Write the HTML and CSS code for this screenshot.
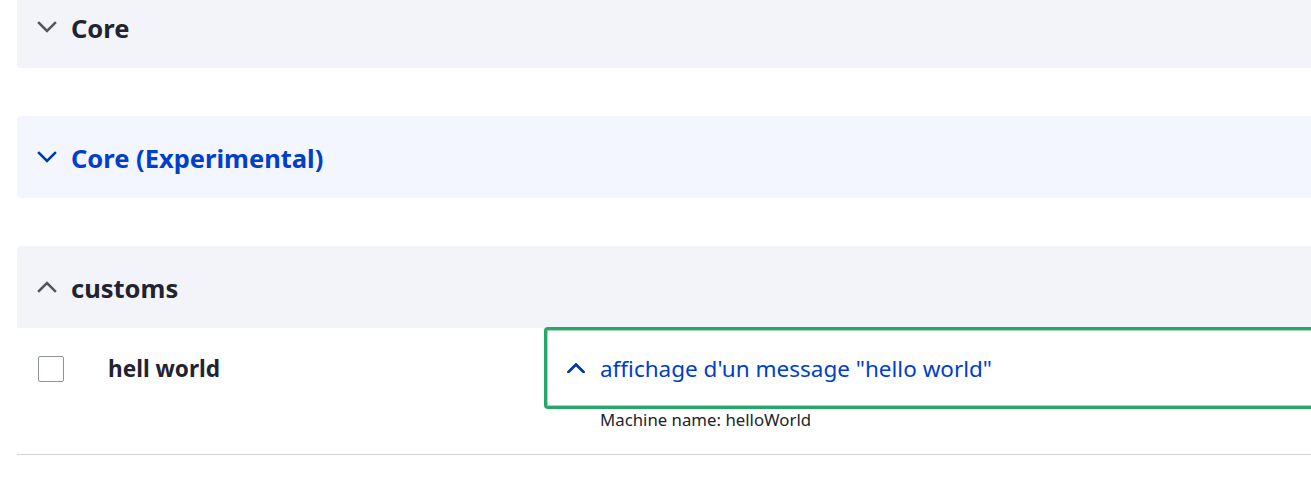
FILE: index.html
```html
<!DOCTYPE html>
<html lang="fr">
<head>
<meta charset="utf-8">
<title>Extend</title>
<link rel="stylesheet" href="styles.css">
</head>
<body>
<div class="page">
  <div class="panel panel-first">
    <div class="summary">
      <svg class="chev" viewBox="0 0 20 12" width="20" height="12"><polyline points="2,2 10,10 18,2"/></svg>
      <span class="title">Core</span>
    </div>
  </div>

  <div class="panel panel-hover">
    <div class="summary">
      <svg class="chev" viewBox="0 0 20 12" width="20" height="12"><polyline points="2,2 10,10 18,2"/></svg>
      <span class="title">Core (Experimental)</span>
    </div>
  </div>

  <div class="panel panel-open">
    <div class="summary">
      <svg class="chev" viewBox="0 0 20 12" width="20" height="12"><polyline points="2,10 10,2 18,10"/></svg>
      <span class="title">customs</span>
    </div>
    <div class="row">
      <div class="cell-check"><span class="checkbox"></span></div>
      <div class="cell-name">hell world</div>
      <div class="cell-desc">
        <div class="desc-summary">
          <svg class="chev-sm" viewBox="0 0 18 10" width="18" height="10"><polyline points="1.5,9 9,1.5 16.5,9"/></svg>
          <span class="desc-text">affichage d'un message "hello world"</span>
        </div>
        <div class="machine">Machine name: helloWorld</div>
      </div>
    </div>
  </div>
</div>
</body>
</html>
```

FILE: styles.css
```css
html, body {
  margin: 0;
  padding: 0;
  background: #ffffff;
  overflow: hidden;
}

body {
  font-family: "Noto Sans", "Open Sans", Arial, sans-serif;
  color: #222330;
}

.page {
  padding-left: 17px;
  margin-right: -120px;
  margin-top: -14px;
}

.panel {
  background: #f3f4f9;
  border-radius: 4px;
  margin-bottom: 48px;
}

.panel-hover {
  background: #f3f6fe;
}

.panel-hover .title {
  color: #003ecc;
}

.panel-hover .chev polyline {
  stroke: #0036b1;
}

.panel-open {
  background: #ffffff;
  border-radius: 4px 4px 0 0;
}

.panel-open .summary {
  background: #f3f4f9;
  border-radius: 4px 4px 0 0;
}

.summary {
  height: 82px;
  display: flex;
  align-items: center;
  padding-left: 20px;
  gap: 14px;
}

.chev {
  display: block;
  flex: none;
}

.chev polyline {
  fill: none;
  stroke: #55565b;
  stroke-width: 2.5;
  stroke-linecap: square;
}

.title {
  font-size: 25.5px;
  font-weight: 700;
  line-height: 32px;
  position: relative;
  top: 1px;
}

.row {
  display: grid;
  grid-template-columns: 91px 436px 1fr;
  border-bottom: 1px solid #d3d4d9;
  height: 127px;
  box-sizing: border-box;
}

.cell-check {
  padding-left: 21px;
  padding-top: 28px;
}

.checkbox {
  display: block;
  width: 26px;
  height: 26px;
  box-sizing: border-box;
  border: 1px solid #8e929c;
  border-radius: 2px;
  background: #fff;
}

.cell-name {
  font-size: 22.6px;
  font-weight: 700;
  line-height: 30px;
  padding-top: 26px;
}

.cell-desc {
  margin-top: -1px;
}

.desc-summary {
  height: 82px;
  box-sizing: border-box;
  border: 3px solid #26a769;
  border-right: none;
  border-radius: 4px 0 0 4px;
  box-shadow: inset 0 0 0 1px #a4dcc0;
  display: flex;
  align-items: center;
  padding-left: 20px;
  gap: 15px;
}

.chev-sm {
  display: block;
  flex: none;
}

.chev-sm polyline {
  fill: none;
  stroke: #0036b1;
  stroke-width: 2.7;
  stroke-linecap: square;
}

.desc-text {
  font-size: 22.5px;
  line-height: 30px;
  color: #003ecc;
  position: relative;
  top: 1px;
}

.machine {
  font-size: 16.8px;
  line-height: 22px;
  padding-left: 56px;
  color: #232429;
}
```
